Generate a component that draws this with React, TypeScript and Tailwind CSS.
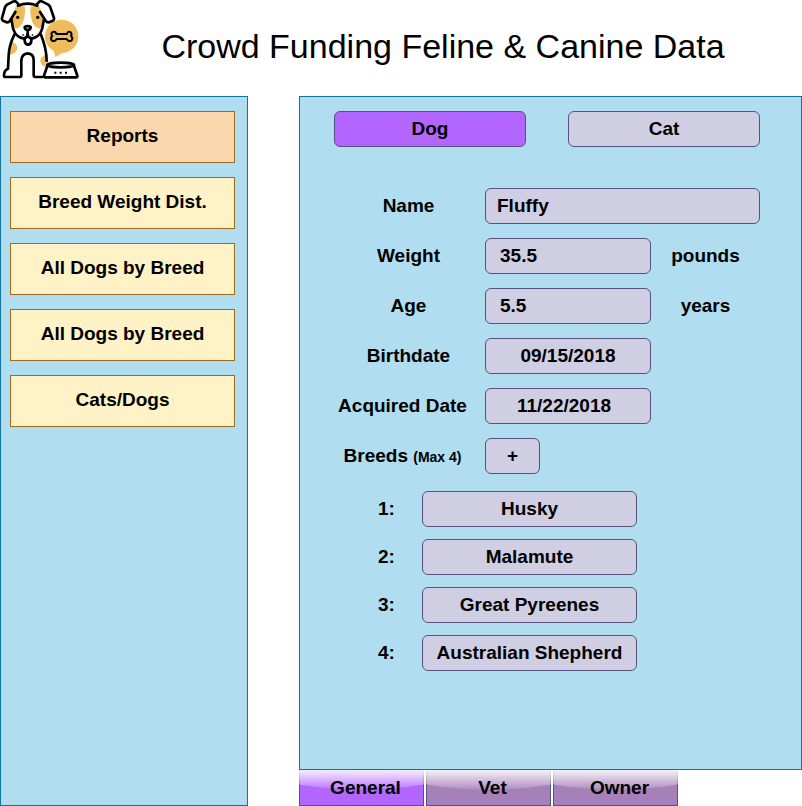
import type { ReactNode } from "react";

const fieldBase =
  "h-9 min-w-0 rounded-md border border-[#56517e] bg-[#d0cee2]";

const reports = [
  "Breed Weight Dist.",
  "All Dogs by Breed",
  "All Dogs by Breed",
  "Cats/Dogs",
];

const breeds = ["Husky", "Malamute", "Great Pyreenes", "Australian Shepherd"];

const tabs = [
  { name: "General", color: "bg-[#b266ff]" },
  { name: "Vet", color: "bg-[#a680b8]" },
  { name: "Owner", color: "bg-[#a680b8]" },
];

function DogLogo() {
  return (
    <svg viewBox="0 0 246 246" className="size-[82px] shrink-0" role="img" aria-label="Dog with a food bowl">
      <circle cx="185" cy="109" r="50" fill="#efbc5c" />
      <path d="M160 145 L166 172 L194 154 Z" fill="#efbc5c" />
      <g fill="#efbc5c">
        <path d="M46 22 Q62 14 75 21 Q77 50 67 70 Q58 88 44 85 L36 57 Z" />
        <path d="M120 22 Q104 14 91 21 Q89 50 99 70 Q108 88 124 85 L130 57 Z" />
        <path d="M32 125 Q52 128 52 145 Q50 160 28 166 Z" />
        <path d="M136 166 Q120 170 121 184 Q124 199 138 201 Z" />
      </g>
      <g fill="none" stroke="#000" strokeWidth="8" strokeLinecap="round" strokeLinejoin="round">
        <path d="M54 17 Q83 5 112 17" />
        <path d="M57 15 L48 5 Q44 2 39 5 L21 14 Q17 17 15 22 L6 54 Q5 60 9 62 L20 67 Q26 68 30 62 L46 36" fill="none" />
        <path d="M109 15 L118 5 Q122 2 127 5 L145 14 Q149 17 151 22 L162 54 Q163 60 159 62 L147 67 Q141 68 137 62 L120 36" />
        <path d="M34 57 L39 84 Q44 103 56 110 Q65 116 72 115 Q83 113 83 102 L83 90" />
        <path d="M132 57 L127 84 Q122 103 110 110 Q101 116 94 115 Q83 113 83 102" />
        <path d="M74 81 Q83 76 92 81 Q92 89 83 90 Q74 89 74 81 Z" />
        <path d="M74 117 V123 Q76 134 84 134 Q93 133 94 123 V117" />
        <path d="M43 104 Q27 137 26 166 L24 206 Q12 211 12 227 Q12 231 17 231 H60 Q64 231 64 226 V181 Q66 161 83 160 Q101 161 101 181 V226 Q101 231 106 231 H127" />
        <path d="M123 104 Q136 137 139 166 L140 183" />
        <path d="M143 195 L132 227 Q131 232 136 232 H228 Q233 232 232 227 L221 195" />
        <ellipse cx="182" cy="195" rx="40" ry="7" fill="#fff" />
        <path d="M169 102 H201 Q203 93 211 96 Q217 100 213 108 Q220 113 215 121 Q206 127 200 117 H170 Q164 127 155 121 Q150 113 157 108 Q151 100 158 96 Q167 93 169 102 Z" strokeWidth="6" />
      </g>
      <circle cx="53" cy="52" r="5" />
      <circle cx="113" cy="52" r="5" />
      <path d="M163 218 h6 M179 218 h6 M195 218 h6" stroke="#000" strokeWidth="6" />
      <path d="M69 105 h1 M97 105 h1" stroke="#000" strokeWidth="5" strokeLinecap="round" />
    </svg>
  );
}

function Row({ label, htmlFor, indent, children }: { label: ReactNode; htmlFor: string; indent?: boolean; children: ReactNode }) {
  return (
    <div className="flex items-center">
      <label htmlFor={htmlFor} className={`w-[151px] shrink-0 pr-[14px] text-center whitespace-nowrap ${indent ? "pl-3" : ""}`}>
        {label}
      </label>
      {children}
    </div>
  );
}

function Glass({ id }: { id: string }) {
  return (
    <svg viewBox="0 0 125 36" preserveAspectRatio="none" className="absolute -inset-px h-9 w-[125px]" aria-hidden="true">
      <defs>
        <linearGradient id={id} x1="0" y1="0" x2="0" y2="1">
          <stop offset="0" stopColor="#fff" stopOpacity="0.9" />
          <stop offset="1" stopColor="#fff" stopOpacity="0.1" />
        </linearGradient>
      </defs>
      <path d="M0 0 V14.4 Q62.5 25.2 125 14.4 V0 Z" fill={`url(#${id})`} />
    </svg>
  );
}

export default function App() {
  return (
    <div className="flex min-h-screen flex-col bg-white font-['Liberation_Sans',Arial,sans-serif] text-[19px] leading-6 font-bold text-black">
      <header className="flex h-24 items-start">
        <DogLogo />
        <h1 className="flex-1 pt-[26px] pl-[2px] text-center text-[34px] leading-10 font-normal">
          Crowd Funding Feline &amp; Canine Data
        </h1>
      </header>

      <div className="flex flex-1 gap-[51px]">
        <aside className="w-[248px] shrink-0 border border-[#10739e] bg-[#b1ddf0] pt-[14px] pr-3 pl-[9px]">
          <nav className="flex flex-col gap-[14px]">
            <button type="button" className="h-[52px] border border-[#a0691c] bg-[#fad7ac] pb-[3px]">
              Reports
            </button>
            {reports.map((name, i) => (
              <button key={i} type="button" className="h-[52px] border border-[#a0691c] bg-[#fff2c6] pb-[3px]">
                {name}
              </button>
            ))}
          </nav>
        </aside>

        <main className="flex min-w-0 flex-1 flex-col">
          <form className="flex-1 border border-[#10739e] bg-[#b1ddf0] pt-[14px] pr-[41px] pb-10 pl-[34px]">
            <div className="flex gap-[42px]">
              <button type="button" className="h-9 flex-1 rounded-md border border-[#56517e] bg-[#b266ff]">Dog</button>
              <button type="button" className="h-9 flex-1 rounded-md border border-[#56517e] bg-[#d0cee2]">Cat</button>
            </div>

            <div className="mt-[41px] flex flex-col gap-[14px]">
              <Row label="Name" htmlFor="name" indent>
                <input id="name" defaultValue="Fluffy" className={`${fieldBase} flex-1 px-[11px]`} />
              </Row>
              <Row label="Weight" htmlFor="weight" indent>
                <input id="weight" defaultValue="35.5" className={`${fieldBase} w-[166px] px-[14px]`} />
                <span className="flex-1 text-center">pounds</span>
              </Row>
              <Row label="Age" htmlFor="age" indent>
                <input id="age" defaultValue="5.5" className={`${fieldBase} w-[166px] px-[14px]`} />
                <span className="flex-1 text-center">years</span>
              </Row>
              <Row label="Birthdate" htmlFor="birthdate" indent>
                <input id="birthdate" defaultValue="09/15/2018" className={`${fieldBase} w-[166px] text-center`} />
              </Row>
              <Row label="Acquired Date" htmlFor="acquired">
                <input id="acquired" defaultValue="11/22/2018" className={`${fieldBase} w-[166px] pr-2 text-center`} />
              </Row>
              <Row label={<>Breeds <span className="text-sm">(Max 4)</span></>} htmlFor="add-breed">
                <button id="add-breed" type="button" className={`${fieldBase} w-[55px]`}>+</button>
              </Row>
            </div>

            <div className="mt-[17px] flex flex-col gap-3">
              {breeds.map((name, i) => (
                <div key={name} className="flex items-center">
                  <label htmlFor={`breed-${i}`} className="w-[88px] shrink-0 pl-[44px]">{i + 1}:</label>
                  <input id={`breed-${i}`} defaultValue={name} className={`${fieldBase} w-[215px] text-center`} />
                </div>
              ))}
            </div>
          </form>

          <nav className="flex gap-[2px]">
            {tabs.map((tab) => (
              <button key={tab.name} type="button" className={`relative h-9 w-[125px] border border-[#56517e] pl-2 ${tab.color}`}>
                <Glass id={`glass-${tab.name}`} />
                <span className="relative">{tab.name}</span>
              </button>
            ))}
          </nav>
        </main>
      </div>
    </div>
  );
}
